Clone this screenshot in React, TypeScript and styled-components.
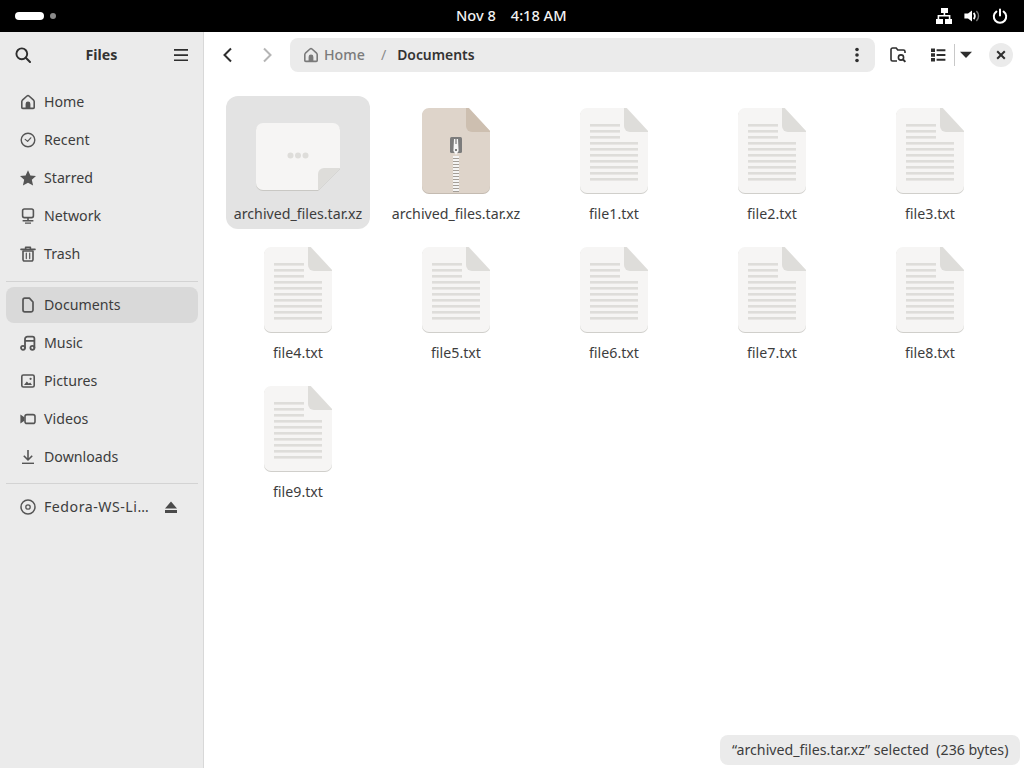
import React from 'react';
import styled, { createGlobalStyle } from 'styled-components';

const GlobalStyle = createGlobalStyle`
  html, body {
    margin: 0;
    padding: 0;
    height: 100%;
    overflow: hidden;
    background: #fff;
    font-family: "Noto Sans", "Open Sans", sans-serif;
  }
`;

const Screen = styled.div`
  position: relative;
  width: 1024px;
  height: 768px;
  overflow: hidden;
  background: #fff;
  color: #2e2e2e;
  font-size: 14.2px;
`;

const TopBar = styled.div`
  position: relative;
  height: 32px;
  background: #000;
  color: #fff;
`;

const ActivityPill = styled.div`
  position: absolute;
  left: 15px;
  top: 12px;
  width: 29px;
  height: 8px;
  border-radius: 4px;
  background: #fff;
`;

const ActivityDot = styled.div`
  position: absolute;
  left: 50px;
  top: 13px;
  width: 6px;
  height: 6px;
  border-radius: 50%;
  background: #8a8a8a;
`;

const Clock = styled.div`
  position: absolute;
  left: 456px;
  top: 0;
  display: flex;
  gap: 15px;
  line-height: 31px;
  font-size: 14.6px;
  font-weight: 500;
  color: #f2f2f2;
`;

const TrayIcon = styled.svg<{ $left: number }>`
  position: absolute;
  left: ${({ $left }) => $left}px;
  top: 8px;
`;

const Sidebar = styled.aside`
  position: absolute;
  left: 0;
  top: 32px;
  width: 203px;
  height: 736px;
  background: #ebebeb;
  border-right: 1px solid #d8d8d8;
`;

const SidebarHeader = styled.div`
  position: relative;
  height: 47px;
`;

const SidebarTitle = styled.div`
  position: absolute;
  left: 0;
  right: 0;
  top: 12px;
  text-align: center;
  font-weight: 700;
  line-height: 22px;
  color: #333;
`;

const HeaderIcon = styled.svg<{ $left: number; $top: number }>`
  position: absolute;
  left: ${({ $left }) => $left}px;
  top: ${({ $top }) => $top}px;
`;

const NavGroup = styled.div<{ $top: number }>`
  padding: ${({ $top }) => $top}px 5px 0 6px;
`;

const NavRow = styled.div<{ $active?: boolean }>`
  position: relative;
  display: flex;
  align-items: center;
  height: 36px;
  margin-bottom: 2px;
  padding-left: 14px;
  border-radius: 8px;
  background: ${({ $active }) => ($active ? '#d9d9d9' : 'transparent')};
  color: #3d3d3d;
`;

const NavLabel = styled.span`
  margin-left: 8px;
  line-height: 20px;
`;

const DeviceLabel = styled(NavLabel)`
  letter-spacing: 0.5px;
`;

const EjectIcon = styled.svg`
  position: absolute;
  right: 20px;
  top: 10px;
`;

const Separator = styled.div<{ $top: number }>`
  height: 1px;
  margin: ${({ $top }) => $top}px 5px 0 6px;
  background: #d3d3d3;
`;

const Main = styled.main`
  position: absolute;
  left: 204px;
  top: 32px;
  right: 0;
  bottom: 0;
`;

const ToolIcon = styled.svg<{ $left: number; $top: number }>`
  position: absolute;
  left: ${({ $left }) => $left - 204}px;
  top: ${({ $top }) => $top - 32}px;
`;

const PathBar = styled.div`
  position: absolute;
  left: 86px;
  top: 6px;
  width: 585px;
  height: 34px;
  border-radius: 8px;
  background: #ebebeb;
  display: flex;
  align-items: center;
  padding-left: 13px;
  box-sizing: border-box;
`;

const Crumb = styled.span`
  position: relative;
  top: -1px;
  margin-left: 5px;
  color: #7b7b7b;
  font-weight: 500;
`;

const CrumbSlash = styled.span`
  position: relative;
  top: -1px;
  margin-left: 16px;
  color: #8c8c8c;
`;

const CrumbCurrent = styled.span`
  position: relative;
  top: -1px;
  margin-left: 11px;
  font-size: 13.9px;
  font-weight: 600;
  color: #333;
`;

const ViewDivider = styled.div`
  position: absolute;
  left: 750px;
  top: 12px;
  width: 1px;
  height: 22px;
  background: #c8c8c8;
`;

const CloseButton = styled.div`
  position: absolute;
  left: 785px;
  top: 11px;
  width: 24px;
  height: 24px;
  border-radius: 50%;
  background: #ebebeb;
  display: flex;
  align-items: center;
  justify-content: center;
`;

const FileGrid = styled.div`
  position: absolute;
  left: 15px;
  top: 64px;
  display: grid;
  grid-template-columns: repeat(5, 158px);
  grid-auto-rows: 139px;
`;

const FileCell = styled.div<{ $selected?: boolean }>`
  width: 144px;
  height: 133px;
  margin: 0 auto;
  border-radius: 12px;
  background: ${({ $selected }) => ($selected ? '#e3e3e3' : 'transparent')};
`;

const IconSlot = styled.div`
  height: 108px;
  display: flex;
  justify-content: center;
  align-items: flex-start;
  padding-top: 11px;
  box-sizing: border-box;
`;

const BlankSvg = styled.svg`
  margin-top: 15px;
`;

const FileName = styled.div`
  text-align: center;
  line-height: 20px;
  color: #3d3d3d;
  white-space: nowrap;
`;

const StatusBar = styled.div`
  position: absolute;
  left: 720px;
  top: 735px;
  width: 300px;
  height: 30px;
  box-sizing: border-box;
  padding-left: 12px;
  border-radius: 8px;
  background: #ebebeb;
  color: #3d3d3d;
  line-height: 29px;
  white-space: pre;
`;

const stroke = { fill: 'none', stroke: 'currentColor', strokeWidth: 1.6, strokeLinecap: 'round', strokeLinejoin: 'round' } as const;

const navIcons: Record<string, React.ReactNode> = {
  home: (
    <>
      <path {...stroke} d="M1.8 13.4V7.6c0-.6.2-1 .6-1.4L7 2c.6-.5 1.4-.5 2 0l4.6 4.2c.4.4.6.8.6 1.4v5.8c0 .6-.4 1-1 1H2.8c-.6 0-1-.4-1-1z" />
      <path d="M5.6 14.5V10a2.4 2.4 0 0 1 4.8 0v4.5z" fill="currentColor" />
    </>
  ),
  recent: (
    <>
      <circle {...stroke} strokeWidth={1.4} cx="8" cy="8" r="6.8" />
      <path {...stroke} strokeWidth={1.2} d="M5.2 7.4 7.6 9.4l3.2-3.6" />
    </>
  ),
  starred: <path fill="currentColor" d="M8 .2l2.4 5.2 5.6.6-4.2 3.8 1.3 5.8L8 12.7l-5.1 2.9 1.3-5.8L0 6l5.6-.6z" />,
  network: (
    <>
      <rect {...stroke} x="2.6" y="1" width="10.8" height="8.6" rx="1.8" />
      <path d="M7.2 10h1.6v2H7.2zM2.6 12h10.8v1.4H2.6zM5 14.4h6v1.4H5z" fill="currentColor" />
    </>
  ),
  trash: (
    <>
      <path {...stroke} d="M3 5h10v8.6a1.4 1.4 0 0 1-1.4 1.4H4.4A1.4 1.4 0 0 1 3 13.6z" />
      <path {...stroke} d="M1 3.4h14M5.6 3V1.2h4.8V3" />
      <path {...stroke} strokeWidth={1.2} d="M6.3 7.2v5.4M9.7 7.2v5.4" />
    </>
  ),
  documents: <path {...stroke} strokeWidth={1.7} d="M3 3a1.8 1.8 0 0 1 1.8-1.8h4.6L13 5v8.2a1.8 1.8 0 0 1-1.8 1.6H4.8A1.8 1.8 0 0 1 3 13z" />,
  music: (
    <>
      <circle {...stroke} strokeWidth={1.8} cx="3" cy="12.8" r="2" />
      <circle {...stroke} strokeWidth={1.8} cx="12.4" cy="12.8" r="2" />
      <path {...stroke} strokeWidth={1.8} d="M5 12.8V4a2.4 2.4 0 0 1 2.4-2.4h5a2 2 0 0 1 2 2v9.2M5 5.8h9.4" />
    </>
  ),
  pictures: (
    <>
      <rect {...stroke} x="1.8" y="2" width="12.4" height="12" rx="1.6" />
      <path fill="currentColor" d="M4 12l2.8-3.4 2 2 1.4-1.2L12 12z" />
      <circle cx="10.6" cy="5.8" r="1.1" fill="currentColor" />
    </>
  ),
  videos: (
    <>
      <rect {...stroke} x="5" y="3.6" width="10" height="8.8" rx="2" />
      <path fill="currentColor" d="M.4 3.6 4.4 6.2v3.6L.4 12.4z" />
    </>
  ),
  downloads: (
    <>
      <path {...stroke} strokeLinecap="butt" d="M8 1v9.6M3.8 6.8 8 11l4.2-4.2" />
      <path fill="currentColor" d="M2 13.6h12v1.4H2z" />
    </>
  ),
  disc: (
    <>
      <circle {...stroke} strokeWidth={1.5} cx="8" cy="8" r="7" />
      <circle {...stroke} strokeWidth={1.3} cx="8" cy="8" r="2.2" />
    </>
  ),
};

const NavIcon = ({ name }: { name: string }) => (
  <svg width="16" height="16" viewBox="0 0 16 16" color="#555">
    {navIcons[name]}
  </svg>
);

// rounded page with a cut corner, used for both the text and zip documents
const PAGE = 'M8 1h40l21 23v55a7 7 0 0 1-7 7H8a7 7 0 0 1-7-7V8a7 7 0 0 1 7-7z';
const FOLD = 'M45 1h2.6L69 24v1H51a6 6 0 0 1-6-6z';

const TextFileIcon = () => (
  <svg width="70" height="88" viewBox="0 0 70 88">
    <path d={PAGE} transform="translate(0 1)" fill="#d0cfcb" />
    <path d={PAGE} fill="#f6f5f4" />
    <path d={FOLD} fill="#deddda" />
    {[17, 23, 29].map((y) => (
      <rect key={y} x="11" y={y} width="30" height="2.6" fill="#deddda" />
    ))}
    {[35, 41, 47, 53, 59, 65, 71].map((y) => (
      <rect key={y} x="11" y={y} width="48" height="2.6" fill="#deddda" />
    ))}
  </svg>
);

const ZipFileIcon = () => (
  <svg width="70" height="88" viewBox="0 0 70 88">
    <path d={PAGE} transform="translate(0 1)" fill="#c4bbb1" />
    <path d={PAGE} fill="#ded4ca" />
    <path d={FOLD} fill="#cdbfb0" />
    <rect x="29" y="30" width="12" height="16" rx="1.5" fill="#7c7c7c" />
    <path d="M33 32h1.4v5h1.2v-5H37l.6 12-2.6 4-2.6-4z" fill="#f6f6f6" />
    <circle cx="35" cy="43" r="1" fill="#555" />
    {[49, 52, 55, 58, 61, 64, 67, 70, 73, 76, 79, 82].map((y) => (
      <g key={y}>
        <rect x="32" y={y} width="6" height="2" fill="#f4f4f4" />
        <rect x="32" y={y + 2} width="6" height="1" fill="#a49e97" />
      </g>
    ))}
  </svg>
);

const BlankFileIcon = () => (
  <BlankSvg width="86" height="69" viewBox="0 0 86 69">
    <path d="M8 1h70a7 7 0 0 1 7 7v38L63 68H8a7 7 0 0 1-7-7V8a7 7 0 0 1 7-7z" transform="translate(0 1)" fill="#c9c8c4" />
    <path d="M8 1h70a7 7 0 0 1 7 7v38L63 68H8a7 7 0 0 1-7-7V8a7 7 0 0 1 7-7z" fill="#f6f5f4" />
    <path d="M85 46 63 68V52a6 6 0 0 1 6-6z" fill="#deddda" />
    <circle cx="35.5" cy="33.5" r="3" fill="#deddda" />
    <circle cx="43" cy="33.5" r="3" fill="#deddda" />
    <circle cx="50.5" cy="33.5" r="3" fill="#deddda" />
  </BlankSvg>
);

const topNav = [
  { icon: 'home', label: 'Home' },
  { icon: 'recent', label: 'Recent' },
  { icon: 'starred', label: 'Starred' },
  { icon: 'network', label: 'Network' },
  { icon: 'trash', label: 'Trash' },
];

const placeNav = [
  { icon: 'documents', label: 'Documents', active: true },
  { icon: 'music', label: 'Music' },
  { icon: 'pictures', label: 'Pictures' },
  { icon: 'videos', label: 'Videos' },
  { icon: 'downloads', label: 'Downloads' },
];

const files = ['file1.txt', 'file2.txt', 'file3.txt', 'file4.txt', 'file5.txt', 'file6.txt', 'file7.txt', 'file8.txt', 'file9.txt'];

export default function App() {
  return (
    <Screen>
      <GlobalStyle />
      <TopBar>
        <ActivityPill />
        <ActivityDot />
        <Clock>
          <span>Nov 8</span>
          <span>4:18 AM</span>
        </Clock>
        <TrayIcon $left={936} width="16" height="16" viewBox="0 0 16 16">
          <path fill="#fff" d="M5 0h7v5H9.2v2H14.4v4H16v5H9v-5h3.8V8.6H3.2V11H7v5H0v-5h1.6V7h6V5H5z" />
        </TrayIcon>
        <TrayIcon $left={964} width="16" height="16" viewBox="0 0 16 16">
          <path fill="#fff" d="M8 2.4v11.2L4 10.6H.4V5.4H4z" />
          <path fill="none" stroke="#fff" strokeWidth="1.8" d="M9.6 5a4.2 4.2 0 0 1 0 6" />
          <path fill="none" stroke="#777" strokeWidth="1.5" d="M12.4 3a7 7 0 0 1 0 10" />
        </TrayIcon>
        <TrayIcon $left={992} width="16" height="16" viewBox="0 0 16 16">
          <path fill="none" stroke="#fff" strokeWidth="2" strokeLinecap="round" d="M8 1.4v6M4.4 3.6a6.2 6.2 0 1 0 7.2 0" />
        </TrayIcon>
      </TopBar>

      <Sidebar>
        <SidebarHeader>
          <HeaderIcon $left={15} $top={15} width="16" height="16" viewBox="0 0 16 16">
            <circle cx="6.8" cy="6.8" r="5.4" fill="none" stroke="#2e2e2e" strokeWidth="1.9" />
            <path d="M10.8 10.8 15 15" stroke="#2e2e2e" strokeWidth="2" strokeLinecap="round" />
          </HeaderIcon>
          <SidebarTitle>Files</SidebarTitle>
          <HeaderIcon $left={173} $top={15} width="16" height="16" viewBox="0 0 16 16">
            <path d="M1 2h14v1.7H1zM1 7.2h14v1.7H1zM1 12.4h14v1.7H1z" fill="#2e2e2e" />
          </HeaderIcon>
        </SidebarHeader>
        <NavGroup $top={5}>
          {topNav.map((item) => (
            <NavRow key={item.label}>
              <NavIcon name={item.icon} />
              <NavLabel>{item.label}</NavLabel>
            </NavRow>
          ))}
        </NavGroup>
        <Separator $top={9} />
        <NavGroup $top={5}>
          {placeNav.map((item) => (
            <NavRow key={item.label} $active={item.active}>
              <NavIcon name={item.icon} />
              <NavLabel>{item.label}</NavLabel>
            </NavRow>
          ))}
        </NavGroup>
        <Separator $top={8} />
        <NavGroup $top={5}>
          <NavRow>
            <NavIcon name="disc" />
            <DeviceLabel>Fedora-WS-Li…</DeviceLabel>
            <EjectIcon width="14" height="16" viewBox="0 0 14 16">
              <path d="M7 2.5 13 9.4H1zM1 11h12v3H1z" fill="#4a4a4a" />
            </EjectIcon>
          </NavRow>
        </NavGroup>
      </Sidebar>

      <Main>
        <ToolIcon $left={220} $top={47} width="16" height="16" viewBox="0 0 16 16">
          <path d="M11 1.5 4.5 8l6.5 6.5" fill="none" stroke="#2e2e2e" strokeWidth="2" />
        </ToolIcon>
        <ToolIcon $left={259} $top={47} width="16" height="16" viewBox="0 0 16 16">
          <path d="M5 1.5 11.5 8 5 14.5" fill="none" stroke="#b5b5b5" strokeWidth="2" />
        </ToolIcon>
        <PathBar>
          <svg width="16" height="16" viewBox="0 0 16 16" color="#7b7b7b">
            {navIcons.home}
          </svg>
          <Crumb>Home</Crumb>
          <CrumbSlash>/</CrumbSlash>
          <CrumbCurrent>Documents</CrumbCurrent>
        </PathBar>
        <ToolIcon $left={849} $top={47} width="16" height="16" viewBox="0 0 16 16">
          <circle cx="8" cy="2.5" r="1.8" fill="#2e2e2e" />
          <circle cx="8" cy="8" r="1.8" fill="#2e2e2e" />
          <circle cx="8" cy="13.5" r="1.8" fill="#2e2e2e" />
        </ToolIcon>
        <ToolIcon $left={890} $top={47} width="17" height="16" viewBox="0 0 17 16">
          <path d="M7 14H2.6A1.6 1.6 0 0 1 1 12.4V2.6A1.6 1.6 0 0 1 2.6 1h3.6l1.6 2h5.6A1.6 1.6 0 0 1 15 4.6V6" fill="none" stroke="#2e2e2e" strokeWidth="1.6" />
          <circle cx="11" cy="10.5" r="2.6" fill="none" stroke="#2e2e2e" strokeWidth="1.6" />
          <path d="m13 12.5 2.4 2.4" stroke="#2e2e2e" strokeWidth="1.9" />
        </ToolIcon>
        <ToolIcon $left={930} $top={47} width="16" height="16" viewBox="0 0 16 16">
          <path d="M1 1.5h4V5H1zM1 6.3h4v3.5H1zM1 11h4v3.5H1zM6.6 2.2H15.4v2H6.6zM6.6 7H15.4v2H6.6zM6.6 11.8H15.4v2H6.6z" fill="#2e2e2e" />
        </ToolIcon>
        <ViewDivider />
        <ToolIcon $left={959} $top={47} width="14" height="16" viewBox="0 0 14 16">
          <path d="M1 4.8h12L7 11z" fill="#2e2e2e" />
        </ToolIcon>
        <CloseButton>
          <svg width="10" height="10" viewBox="0 0 10 10">
            <path d="m1.2 1.2 7.6 7.6M8.8 1.2 1.2 8.8" stroke="#2e2e2e" strokeWidth="2" />
          </svg>
        </CloseButton>
        <FileGrid>
          <FileCell $selected>
            <IconSlot>
              <BlankFileIcon />
            </IconSlot>
            <FileName>archived_files.tar.xz</FileName>
          </FileCell>
          <FileCell>
            <IconSlot>
              <ZipFileIcon />
            </IconSlot>
            <FileName>archived_files.tar.xz</FileName>
          </FileCell>
          {files.map((name) => (
            <FileCell key={name}>
              <IconSlot>
                <TextFileIcon />
              </IconSlot>
              <FileName>{name}</FileName>
            </FileCell>
          ))}
        </FileGrid>
      </Main>

      <StatusBar>“archived_files.tar.xz” selected  (236 bytes)</StatusBar>
    </Screen>
  );
}
